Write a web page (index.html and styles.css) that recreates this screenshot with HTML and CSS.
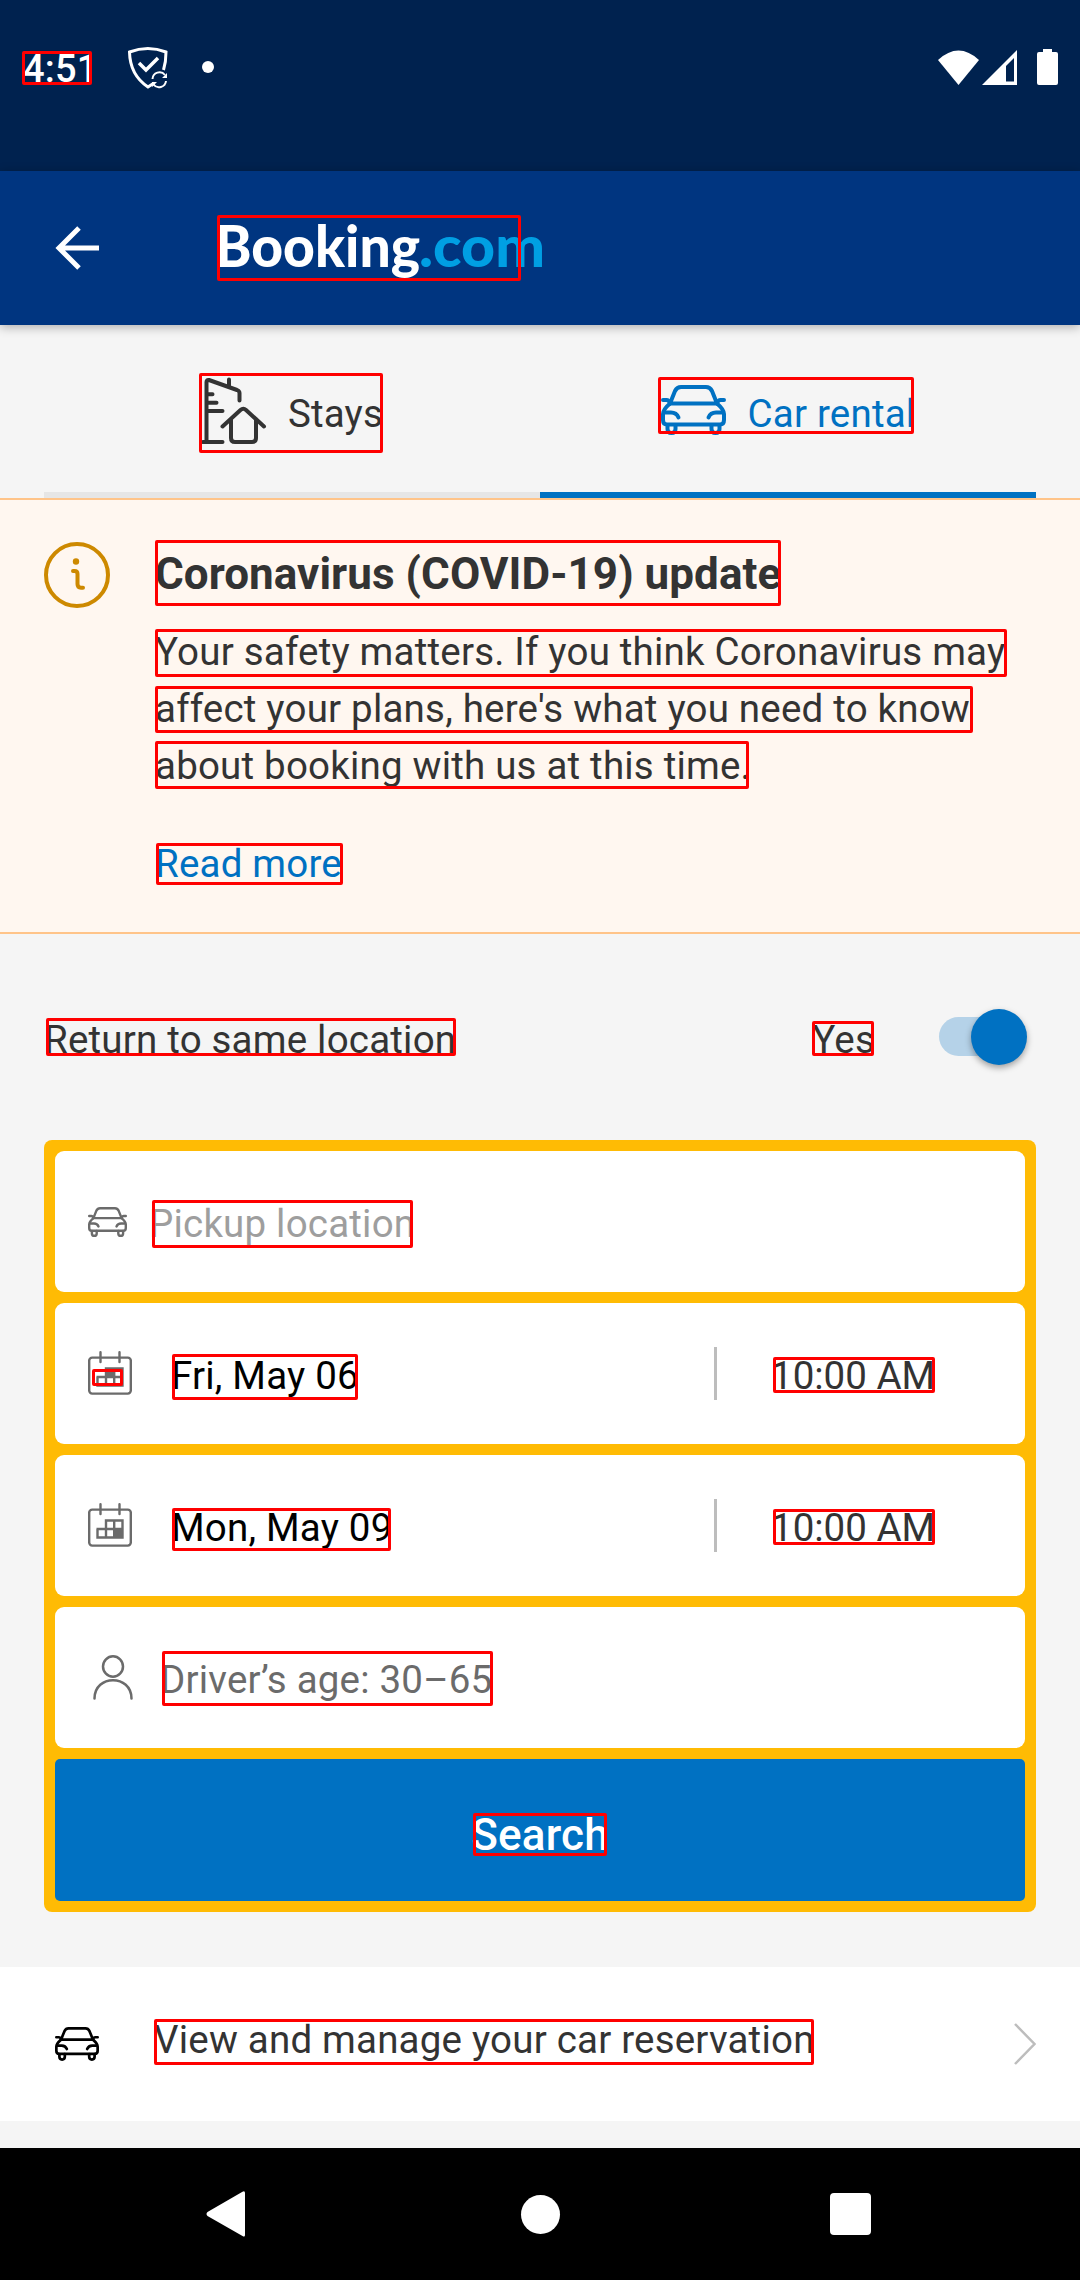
FILE: index.html
```html
<!DOCTYPE html>
<html lang="en">
<head>
<meta charset="utf-8">
<title>Booking.com</title>
<link rel="stylesheet" href="styles.css">
</head>
<body>
<svg class="defs" width="0" height="0">
  <symbol id="car" viewBox="0 0 65 50">
    <g fill="none" stroke="currentColor" stroke-width="4" stroke-linecap="round" stroke-linejoin="round">
      <path d="M9 18.5L14 6Q16 2 20 2H45Q49 2 51 6L56 18.5Z"/>
      <path d="M2 15H5.500Q8 15 9 18.500M63 15H59.500Q57 15 56 18.500"/>
      <path d="M9 18.500Q2 24.500 2 29V35Q2 39.500 6 39.500H59Q63 39.500 63 35V29Q63 24.500 56 18.500"/>
      <path d="M4 27.500H10Q15.500 27.500 17.500 32.500M61 27.500H55Q49.500 27.500 47.500 32.500"/>
      <path d="M6.500 40V44Q6.500 48 10.500 48Q14.500 48 14.500 44V40M50.500 40V44Q50.500 48 54.500 48Q58.500 48 58.500 44V40"/>
    </g>
  </symbol>
  <symbol id="calendar" viewBox="0 0 44 44">
    <g fill="none" stroke="currentColor" stroke-width="2.400" stroke-linecap="round">
      <rect x="1.200" y="6.600" width="41.600" height="36" rx="3"/>
      <path d="M12.500 1.200V11M31.500 1.200V11"/>
      <path stroke-linecap="butt" d="M9.500 26V34.500H34.500V17.500H18V34.500M8.500 26H34.500M26.200 17.500V34.500"/>
    </g>
  </symbol>
</svg>

<header class="status">
  <span class="time">4:51</span>
  <svg class="shield" width="42" height="44" viewBox="0 0 42 44" fill="none" stroke="#fff" stroke-width="3">
    <path d="M26 37L20 41Q2 29 1.500 6Q20 -1 38 6Q38 16 35.500 24"/>
    <path d="M11 17L18 24L30 12" stroke-width="3.500"/>
    <path d="M24.500 33A7 7 0 0 1 37 29M38 35A7 7 0 0 1 25.500 38.500" stroke-width="2"/>
    <path d="M39 27V32H34ZM24 41V36H29Z" fill="#fff" stroke="none"/>
  </svg>
  <span class="dot"></span>
  <svg class="signals" width="122" height="38" viewBox="0 0 122 38" fill="#fff">
    <path d="M0 12Q20.500 -7 41 12L20.500 37Z"/>
    <path fill-rule="evenodd" d="M44 37L79 2V37ZM68 18V33.500H76V10Z"/>
    <path d="M105 1H114V4H118Q120 4 120 6V35Q120 37 118 37H101Q99 37 99 35V6Q99 4 101 4H105Z"/>
  </svg>
</header>

<div class="appbar">
  <svg width="44" height="44" viewBox="0 0 44 44" fill="none" stroke="#fff" stroke-width="5">
    <path d="M44 22H4M24 2L4 22L24 42"/>
  </svg>
  <svg class="logo" width="330" height="70" viewBox="0 0 330 70">
    <text x="0" y="53.500" textLength="205" lengthAdjust="spacingAndGlyphs" fill="#fff">Booking</text>
    <text x="204" y="53.500" textLength="126" lengthAdjust="spacingAndGlyphs" fill="#009fe3">.com</text>
  </svg>
</div>

<nav class="tabs">
  <div class="tab">
    <svg class="stays" width="66" height="68" viewBox="0 0 66 68" fill="none" stroke="currentColor" stroke-width="4" stroke-linecap="round" stroke-linejoin="round">
      <path d="M4.500 65V5Q4.500 2.500 7 3L35 13Q37.500 14 37.500 16V23.500M27 2.500V10M4.500 17.300H10.500M4.500 25.700H14.500M4.500 34H20.500M1 65H20.500"/>
      <path d="M20.500 49.500L38.500 33Q41.300 30.500 44 33L62 49.500M29 42V61Q29 65 33 65H50Q54 65 54 61V42"/>
    </svg>
    <span>Stays</span>
  </div>
  <div class="tab tab-active">
    <svg width="65" height="50"><use href="#car"/></svg>
    <span>Car rental</span>
  </div>
</nav>

<section class="alert">
  <svg width="66" height="66" viewBox="0 0 66 66" fill="none" stroke="#cd8900" stroke-width="4" stroke-linecap="round">
    <circle cx="33" cy="33" r="31"/>
    <path d="M29 29H30.500Q33.500 29 33.500 32V42Q33.500 45.700 37 45.700H39"/>
    <circle cx="32" cy="19.500" r="3.200" fill="#cd8900" stroke="none"/>
  </svg>
  <div class="alert-body">
    <h2>Coronavirus (COVID-19) update</h2>
    <p>Your safety matters. If you think Coronavirus may<br>affect your plans, here's what you need to know<br>about booking with us at this time.</p>
    <a>Read more</a>
  </div>
</section>

<section class="same">
  <span>Return to same location</span>
  <span class="yes">Yes</span>
  <span class="switch"><span class="knob"></span></span>
</section>

<form class="search">
  <div class="field">
    <svg width="39" height="30"><use href="#car"/></svg>
    <span class="pickup">Pickup location</span>
  </div>
  <div class="field">
    <svg class="cal" width="44" height="44"><use href="#calendar"/><path fill="currentColor" d="M18 17H27V26H18Z"/></svg>
    <span class="date">Fri, May 06</span>
    <span class="time-pick">10:00 AM</span>
  </div>
  <div class="field">
    <svg class="cal" width="44" height="44"><use href="#calendar"/><path fill="currentColor" d="M26 26H35V35H26Z"/></svg>
    <span class="date">Mon, May 09</span>
    <span class="time-pick">10:00 AM</span>
  </div>
  <div class="field">
    <svg class="person" width="40" height="45" viewBox="0 0 40 45" fill="none" stroke="currentColor" stroke-width="2.500" stroke-linecap="round">
      <ellipse cx="20" cy="11.500" rx="10" ry="10.200"/>
      <path d="M1.500 43.500C1.500 19 38.500 19 38.500 43.500"/>
    </svg>
    <span class="age">Driver’s age: 30–65</span>
  </div>
  <div class="submit">Search</div>
</form>

<section class="manage">
  <svg width="44" height="34"><use href="#car"/></svg>
  <span>View and manage your car reservation</span>
  <svg class="chevron" width="22" height="42" viewBox="0 0 22 42" fill="none" stroke="#bdbdbd" stroke-width="2.500"><path d="M1 1L20.500 21L1 41"/></svg>
</section>

<footer class="navbar">
  <svg width="40" height="46" viewBox="0 0 40 46"><path fill="#fff" d="M36.500 .8Q39 -.5 39 2V44Q39 46.500 36.500 45L1.500 25Q-.5 23 1.500 21Z"/></svg>
  <span class="home"></span>
  <span class="recent"></span>
</footer>

<div class="mark m1"></div><div class="mark m2"></div><div class="mark m3"></div><div class="mark m4"></div>
<div class="mark m5"></div><div class="mark m6"></div><div class="mark m7"></div><div class="mark m8"></div>
<div class="mark m9"></div><div class="mark m10"></div><div class="mark m11"></div><div class="mark m12"></div>
<div class="mark m13"></div><div class="mark m14"></div><div class="mark m15"></div><div class="mark m16"></div>
<div class="mark m17"></div><div class="mark m18"></div><div class="mark m19"></div><div class="mark m20"></div>
</body>
</html>
```
FILE: styles.css
```css
* { box-sizing: border-box; }
body {
  margin: 0;
  width: 1080px;
  height: 2280px;
  position: relative;
  overflow: hidden;
  background: #f5f5f5;
  color: #333;
  font: 38.5px/45px Roboto, sans-serif;
  letter-spacing: .2px;
  display: flex;
  flex-direction: column;
}
svg { display: block; flex: none; }
span { white-space: nowrap; }
.defs { position: absolute; }

.status {
  height: 171px;
  flex: none;
  background: #00224f;
  display: flex;
  align-items: flex-start;
  padding: 46px 20px 0 23px;
}
.time { width: 105px; padding-top: 1px; font-weight: 500; font-size: 38px; color: #fff; }
.dot { width: 12px; height: 12px; margin: 15px 0 0 32px; border-radius: 50%; background: #fff; }
.signals { margin: 2px 0 0 auto; }

.appbar {
  height: 154px;
  flex: none;
  background: #003580;
  display: flex;
  align-items: center;
  padding-left: 55px;
  box-shadow: 0 2px 10px rgba(0, 0, 0, .3);
}
.logo { margin-left: 116px; overflow: visible; font: 900 58px Lato, sans-serif; letter-spacing: 0; }

.tabs { height: 173px; flex: none; display: flex; padding: 0 44px; }
.tab {
  flex: 1;
  display: flex;
  justify-content: center;
  align-items: center;
  gap: 22px;
  border-bottom: 6px solid #e6e6e6;
}
.tab .stays { margin: 4px -2px 0 1px; }
.tab span { margin-top: 9px; }
.tab-active { color: #0071c2; border-color: #0071c2; }
.tab-active svg { margin-top: 2px; }

.alert {
  height: 436px;
  flex: none;
  display: flex;
  gap: 45px;
  padding: 42px 44px 0;
  background: #fff7f0;
  border-top: 2px solid #ffc489;
  border-bottom: 2px solid #ffc489;
}
.alert-body { display: flex; flex-direction: column; }
.alert h2 { margin: 6px 0 0; font-size: 44px; line-height: 52px; font-weight: 700; letter-spacing: .05px; white-space: nowrap; }
.alert p { margin: 23px 0 0; line-height: 57px; white-space: nowrap; }
.alert a { margin-top: 47px; color: #0071c2; }

.same { height: 206px; flex: none; display: flex; align-items: center; padding: 3px 53px 0 44px; }
.same > span { margin-top: 1px; }
.same .yes { margin-left: auto; margin-right: 64px; }
.same .switch { position: relative; width: 80px; height: 39px; margin: 0 8px 4px 0; border-radius: 20px; background: #b5d2e8; }
.knob {
  position: absolute;
  left: 32px;
  top: -8px;
  width: 56px;
  height: 56px;
  border-radius: 50%;
  background: #0071c2;
  box-shadow: 0 3px 6px rgba(0, 0, 0, .35);
}

.search {
  flex: none;
  margin: 0 44px;
  padding: 11px;
  display: flex;
  flex-direction: column;
  gap: 11px;
  border-radius: 8px;
  background: #ffbb04;
}
.field { height: 141px; padding-left: 33px; display: flex; align-items: center; border-radius: 9px; background: #fff; color: #6b6b6b; }
.field > span { padding-top: 3px; }
.cal { margin-top: -2px; }
.pickup { margin-left: 22px; color: #9e9e9e; }
.date { width: 543px; margin-left: 39px; color: #000; }
.field > .time-pick { display: flex; align-items: center; height: 53px; padding-left: 54px; border-left: 3px solid #bdbdbd; color: #333; letter-spacing: 0; }
.person { margin-left: 5px; }
.age { margin-left: 27px; }
.submit { height: 142px; border-radius: 5px; background: #0071c2; color: #fff; text-align: center; font-weight: 500; font-size: 44px; line-height: 153px; }

.manage { height: 154px; flex: none; margin-top: 55px; padding: 0 44px 0 55px; display: flex; align-items: center; background: #fff; color: #333; }
.manage svg:first-child { color: #000; }
.manage span { margin: -10px 0 0 55px; }
.chevron { margin-left: auto; }

.navbar { height: 132px; margin-top: 27px; flex: none; padding: 0 209px 0 206px; display: flex; align-items: center; background: #000; }
.home { width: 39px; height: 39px; margin-left: 275px; border-radius: 50%; background: #fff; }
.recent { width: 41px; height: 42px; margin-left: auto; border-radius: 4px; background: #fff; }

/* Highlight boxes over each detected text region */
.mark { position: absolute; border: 3px solid #f00; border-radius: 2px; }
.m1 { left: 22px; top: 51px; width: 70px; height: 34px; }
.m2 { left: 217px; top: 215px; width: 304px; height: 66px; }
.m3 { left: 199px; top: 373px; width: 184px; height: 80px; }
.m4 { left: 658px; top: 377px; width: 256px; height: 57px; }
.m5 { left: 155px; top: 540px; width: 626px; height: 66px; }
.m6 { left: 155px; top: 629px; width: 852px; height: 48px; }
.m7 { left: 155px; top: 686px; width: 818px; height: 47px; }
.m8 { left: 155px; top: 741px; width: 594px; height: 48px; }
.m9 { left: 156px; top: 843px; width: 187px; height: 42px; }
.m10 { left: 46px; top: 1018px; width: 410px; height: 38px; }
.m11 { left: 812px; top: 1021px; width: 62px; height: 35px; }
.m12 { left: 152px; top: 1200px; width: 261px; height: 48px; }
.m13 { left: 92px; top: 1369px; width: 31px; height: 17px; }
.m14 { left: 172px; top: 1354px; width: 186px; height: 46px; }
.m15 { left: 172px; top: 1508px; width: 219px; height: 43px; }
.m16 { left: 773px; top: 1357px; width: 162px; height: 36px; }
.m17 { left: 773px; top: 1509px; width: 162px; height: 36px; }
.m18 { left: 162px; top: 1651px; width: 331px; height: 55px; }
.m19 { left: 473px; top: 1813px; width: 134px; height: 43px; }
.m20 { left: 154px; top: 2019px; width: 660px; height: 46px; }
```
